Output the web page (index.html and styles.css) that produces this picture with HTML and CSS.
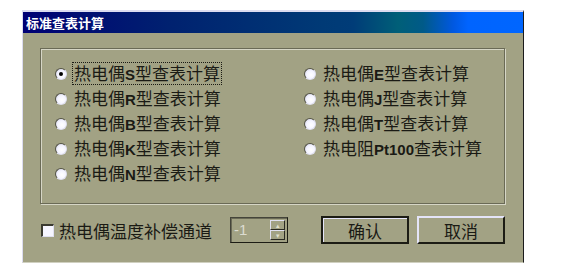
FILE: index.html
```html
<!DOCTYPE html>
<html>
<head>
<meta charset="utf-8">
<link rel="stylesheet" href="styles.css">
</head>
<body>
<div class="window">
  <div class="titlebar">标准查表计算</div>
  <div class="client">
    <div class="group">
      <div class="col">
        <div class="opt"><span class="radio checked"></span><span class="label focus">热电偶<b>S</b>型查表计算</span></div>
        <div class="opt"><span class="radio"></span><span class="label">热电偶<b>R</b>型查表计算</span></div>
        <div class="opt"><span class="radio"></span><span class="label">热电偶<b>B</b>型查表计算</span></div>
        <div class="opt"><span class="radio"></span><span class="label">热电偶<b>K</b>型查表计算</span></div>
        <div class="opt"><span class="radio"></span><span class="label">热电偶<b>N</b>型查表计算</span></div>
      </div>
      <div class="col">
        <div class="opt"><span class="radio"></span><span class="label">热电偶<b>E</b>型查表计算</span></div>
        <div class="opt"><span class="radio"></span><span class="label">热电偶<b>J</b>型查表计算</span></div>
        <div class="opt"><span class="radio"></span><span class="label">热电偶<b>T</b>型查表计算</span></div>
        <div class="opt"><span class="radio"></span><span class="label">热电阻<b>Pt100</b>查表计算</span></div>
      </div>
    </div>
    <div class="bottom">
      <span class="check"></span>
      <span class="check-label">热电偶温度补偿通道</span>
      <div class="spin">
        <span class="spin-val">-1</span>
        <div class="spin-btns">
          <span class="spin-btn">▴</span>
          <span class="spin-btn">▾</span>
        </div>
      </div>
      <button class="btn default">确认</button>
      <button class="btn">取消</button>
    </div>
  </div>
</div>
</body>
</html>
```
FILE: styles.css
```css
html, body {
  margin: 0;
  padding: 0;
  background: #ffffff;
}
body {
  font-family: "Noto Sans CJK SC", "Liberation Sans", sans-serif;
  color: #1a1a14;
}
.window {
  margin: 10px 0 0 22px;
  width: 502px;
  height: 253px;
  box-sizing: border-box;
  background: #a2a284;
  border-top: 2px solid #dcdcf0;
  border-left: 1px solid #dcdcf0;
  border-right: 1px solid #1c1c1c;
  border-bottom: 1px solid #d0d0c0;
}
.titlebar {
  height: 21px;
  line-height: 21px;
  padding-left: 3px;
  color: #ffffff;
  font-weight: bold;
  font-size: 13px;
  background: linear-gradient(to right, #000074 0%, #002270 30%, #003a76 60%, #003c78 66%, #005f78 75%, #005a88 80%, #0058e0 86%, #0064ff 89%, #0066ff 100%);
}
.client {
  padding: 15px 0 0 17px;
}
.group {
  width: 465px;
  height: 156px;
  box-sizing: border-box;
  border: 1px solid #6a6a56;
  box-shadow: inset 1px 1px 0 #d6d6c6, 1px 1px 0 #d6d6c6;
  display: grid;
  grid-template-columns: 249px 1fr;
  padding: 12px 0 0 15px;
}
.opt {
  display: flex;
  align-items: center;
  height: 25px;
}
.radio {
  width: 12px;
  height: 12px;
  box-sizing: border-box;
  border-radius: 50%;
  background: radial-gradient(circle at 60% 60%, #ffffff 0%, #f4f4ff 50%, #c8c8e0 100%);
  border: 1px solid #555548;
  border-right-color: #e0e0f0;
  border-bottom-color: #e0e0f0;
  margin-left: -1px;
  margin-right: 6px;
  flex-shrink: 0;
  position: relative;
}
.radio.checked::after {
  content: "";
  position: absolute;
  left: 3px;
  top: 3px;
  width: 4px;
  height: 4px;
  border-radius: 50%;
  background: #000;
}
.label {
  font-size: 17px;
  line-height: 19px;
  white-space: nowrap;
  padding: 0 1px;
  border: 1px solid transparent;
  margin-left: -1px;
}
.label b {
  font-family: "Liberation Sans", sans-serif;
  font-weight: bold;
  font-size: 15px;
}
.label.focus {
  border: 1px dotted #1a1a14;
}
.bottom {
  display: flex;
  align-items: center;
  margin-top: 12px;
  height: 28px;
}
.check {
  width: 13px;
  height: 13px;
  box-sizing: border-box;
  margin-left: 1px;
  background: #f6f6ff;
  border-top: 2px solid #3a3a30;
  border-left: 2px solid #3a3a30;
  border-right: 1px solid #e0e0f0;
  border-bottom: 1px solid #e0e0f0;
  flex-shrink: 0;
}
.check-label {
  font-size: 17px;
  margin-left: 5px;
  width: 171px;
  white-space: nowrap;
}
.spin {
  width: 58px;
  height: 26px;
  box-sizing: border-box;
  border: 1px solid #1c1c14;
  border-top-color: #44443a;
  border-left-color: #44443a;
  box-shadow: inset 1px 1px 0 #6a6a56;
  display: flex;
  align-items: stretch;
  padding: 2px;
}
.spin-val {
  flex: 1;
  color: #dcdcd0;
  font-family: "Liberation Sans", sans-serif;
  font-size: 15px;
  line-height: 20px;
  padding-left: 1px;
}
.spin-btns {
  width: 15px;
  display: flex;
  flex-direction: column;
}
.spin-btn {
  flex: 1;
  box-sizing: border-box;
  border-top: 1px solid #e0e0f0;
  border-left: 1px solid #e0e0f0;
  border-right: 1px solid #2a2a22;
  border-bottom: 1px solid #2a2a22;
  font-size: 7px;
  line-height: 8px;
  text-align: center;
  color: #e0e0d0;
  background: #a2a284;
}
.btn {
  width: 88px;
  height: 28px;
  box-sizing: border-box;
  background: #a2a284;
  font-family: "Noto Sans CJK SC", sans-serif;
  font-size: 17px;
  color: #1a1a14;
  padding: 0;
  border-top: 2px solid #e4e4f8;
  border-left: 2px solid #e4e4f8;
  border-right: 2px solid #1c1c14;
  border-bottom: 2px solid #1c1c14;
  margin-left: 8px;
}
.btn.default {
  margin-left: 33px;
  outline: 1px solid #1c1c14;
  outline-offset: -1px;
  border-top: 2px solid #1c1c14;
  border-left: 2px solid #1c1c14;
  box-shadow: inset 1px 1px 0 #e4e4f8;
}
```
